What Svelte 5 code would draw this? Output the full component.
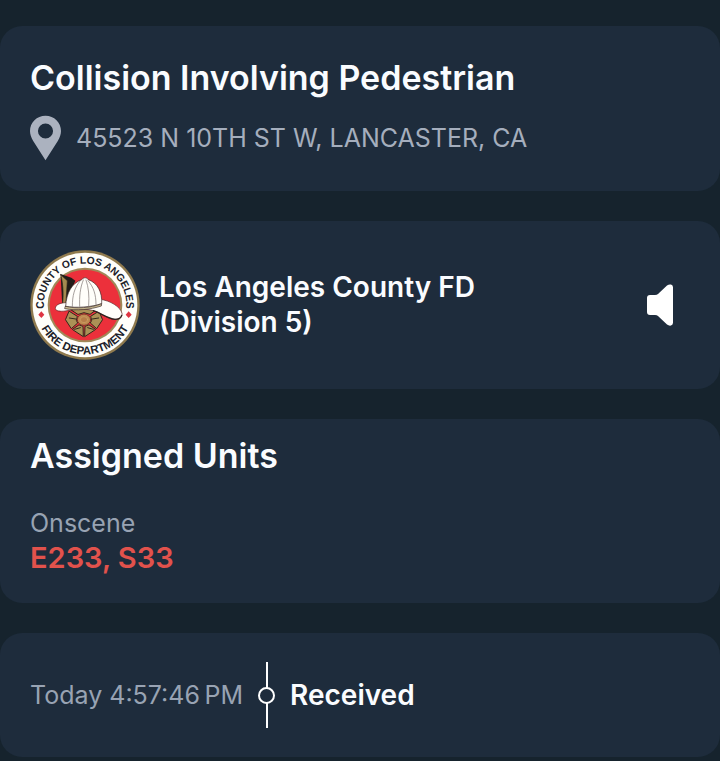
<script>
  const incident = {
    title: 'Collision Involving Pedestrian',
    address: '45523 N 10TH ST W, LANCASTER, CA',
    agency: ['Los Angeles County FD', '(Division 5)']
  };
  const unitGroups = [{ status: 'Onscene', units: ['E233', 'S33'] }];
  const events = [{ time: 'Today 4:57:46\u2009PM', label: 'Received' }];
</script>

<main>
  <section class="card summary">
    <h1>{incident.title}</h1>
    <p class="address">
      <svg class="pin" viewBox="0 0 32 46" aria-hidden="true">
        <path
          fill-rule="evenodd"
          d="M16 0C7 0 0 7 0 15.8c0 3.700 1.300 6.900 3.300 10.200L16 46l12.700-20C30.700 22.700 32 19.500 32 15.800 32 7 25 0 16 0Zm0 8a7.800 7.800 0 1 1 0 15.600A7.800 7.800 0 0 1 16 8Z"
        />
      </svg>
      <span>{incident.address}</span>
    </p>
  </section>

  <section class="card agency">
    <svg class="seal" viewBox="0 0 330 330" role="img" aria-label="County of Los Angeles Fire Department">
      <defs>
        <path id="seal-top" d="M41 176V165A124 124 0 0 1 289 165V176" />
        <path id="seal-bottom" d="M17 165A148 148 0 0 0 313 165" />
      </defs>
      <circle cx="165" cy="165" r="164" fill="#8f7a4e" />
      <circle cx="165" cy="165" r="157" fill="#fffefa" />
      <circle cx="165" cy="165" r="112" fill="#a08858" />
      <circle cx="165" cy="165" r="106" fill="#ec303b" />
      <g class="seal-text">
        <text font-size="31"><textPath href="#seal-top" startOffset="50%">COUNTY OF LOS ANGELES</textPath></text>
        <text font-size="34"><textPath href="#seal-bottom" startOffset="50%">FIRE DEPARTMENT</textPath></text>
      </g>
      <path d="m34 184 9 10-9 10-9-10ZM296 184l9 10-9 10-9-10Z" fill="#df3442" />
      <g stroke-linejoin="round" stroke-linecap="round">
        <g fill="#ab9156" stroke="#33291c" stroke-width="3">
          <path d="M125 180 162 171 198 180 180 193 162 188 145 193Z" />
          <path d="M118 184 142 199 139 211 143 219 124 236 107 210Z" />
          <path d="M206 184 182 199 185 211 181 219 200 236 217 210Z" />
          <path d="M148 225 159 229 160 260 128 239Z" />
          <path d="M176 225 165 229 164 260 196 239Z" />
        </g>
        <path
          d="M118 204 137 207M206 204 187 207M134 238 151 233M190 238 173 233"
          fill="none" stroke="#33291c" stroke-width="3"
        />
        <ellipse cx="162" cy="209" rx="20" ry="17" fill="#c08a50" stroke="#7d3329" stroke-width="3" />
        <ellipse cx="162" cy="209" rx="11" ry="9" fill="#b77d49" stroke="#cda566" stroke-width="2" />
        <path d="M92 72 124 83l12 9-29 68-10 13Z" fill="#211c18" />
        <path d="M92 74 112 92l-5 78-11 8c5-35 5-72-4-104Z" fill="#a58b50" stroke="#30271b" stroke-width="2" />
        <path
          d="M112 158c-19-1-36 6-36 17 0 8 14 10 29 8 25-4 45-7 72-4 34 5 49 27 78 29 14 0 23-7 21-18-4-19-36-39-66-42Z"
          fill="#fffefa" stroke="#5e2427" stroke-width="2"
        />
        <path d="M190 182c25 8 42 24 65 26 11 0 18-4 20-12" fill="none" stroke="#30231f" stroke-width="4" />
        <path
          d="M107 169c2-41 19-70 48-80 7-8 15-7 20 0 28 10 42 37 40 72-31 10-74 14-108 8Z"
          fill="#fffefa" stroke="#3a2927" stroke-width="2"
        />
        <path
          d="M151 92c-18 20-24 46-24 77M160 90c-10 24-12 50-11 79M168 90c8 22 10 48 8 77M174 92c17 19 24 42 24 71"
          fill="none" stroke="#79706c" stroke-width="2"
        />
        <path d="M107 169c31 8 75 5 108-8l-1 7c-34 11-74 15-109 8Z" fill="#c9b98f" stroke="#3a2927" stroke-width="2" />
      </g>
    </svg>
    <h2>{incident.agency[0]}<br />{incident.agency[1]}</h2>
    <button type="button" aria-label="Play audio">
      <svg viewBox="0 0 28 42" aria-hidden="true">
        <path d="M4 11h5q2 0 3-1l9-8.500Q23 0 25 .5q2 .6 2 2.800v35.400q0 2.200-2 2.800-2 .5-4-1l-9-8.500q-1-1-3-1H4q-3 0-3-3V14q0-3 3-3Z" />
      </svg>
    </button>
  </section>

  <section class="card units">
    <h1>Assigned Units</h1>
    {#each unitGroups as group}
      <p class="status">{group.status}</p>
      <p class="unit-list">{group.units.join(', ')}</p>
    {/each}
  </section>

  <section class="card timeline">
    {#each events as event}
      <time>{event.time}</time>
      <span class="marker" aria-hidden="true"></span>
      <strong>{event.label}</strong>
    {/each}
  </section>
</main>

<style>
  :global(body) {
    margin: 0;
    background: #16232d;
  }

  main {
    display: flex;
    flex-direction: column;
    gap: 30px;
    padding: 26px 0 5px;
    font-family: Inter, 'Liberation Sans', sans-serif;
    color: #fafcff;
  }

  .card {
    padding: 30px;
    border-radius: 22px;
    background: #1e2c3c;
  }

  h1,
  h2,
  p {
    margin: 0;
  }

  h1 {
    font-size: 34px;
    line-height: 44px;
    font-weight: 600;
  }

  .address {
    display: flex;
    align-items: center;
    gap: 15px;
    margin-top: 15px;
    font-size: 25px;
    line-height: 46px;
    color: #a5aebd;
  }

  .pin {
    flex: none;
    width: 31px;
    height: 46px;
    fill: #abb2bf;
  }

  .agency {
    display: flex;
    align-items: center;
    padding: 29px 30px;
  }

  .seal {
    flex: none;
    width: 110px;
    height: 110px;
  }

  .seal-text {
    font-family: 'Liberation Sans', sans-serif;
    font-weight: 700;
    text-anchor: middle;
    fill: #202129;
  }

  h2 {
    flex: 1;
    margin-left: 19px;
    font-size: 28px;
    line-height: 35px;
    font-weight: 600;
  }

  button {
    display: flex;
    padding: 0 16px;
    border: 0;
    background: none;
    cursor: pointer;
  }

  button svg {
    width: 28px;
    height: 42px;
    fill: #fff;
  }

  .units {
    padding: 15px 30px 28px;
  }

  .status {
    margin-top: 28px;
    font-size: 25px;
    line-height: 34px;
    color: #98a3b3;
  }

  .unit-list {
    font-size: 29px;
    line-height: 35px;
    font-weight: 600;
    color: #e2524c;
  }

  .timeline {
    display: flex;
    align-items: center;
    padding: 29px 30px;
  }

  time {
    font-size: 25px;
    color: #98a3b3;
  }

  .marker {
    display: grid;
    place-items: center;
    width: 17px;
    height: 66px;
    margin: 0 15px;
    background: linear-gradient(#fff, #fff) center / 2px 100% no-repeat;
  }

  .marker::before {
    content: '';
    box-sizing: border-box;
    width: 17px;
    height: 17px;
    border: 2px solid #fff;
    border-radius: 50%;
    background: #1e2c3c;
  }

  strong {
    font-size: 28px;
    font-weight: 600;
  }
</style>
